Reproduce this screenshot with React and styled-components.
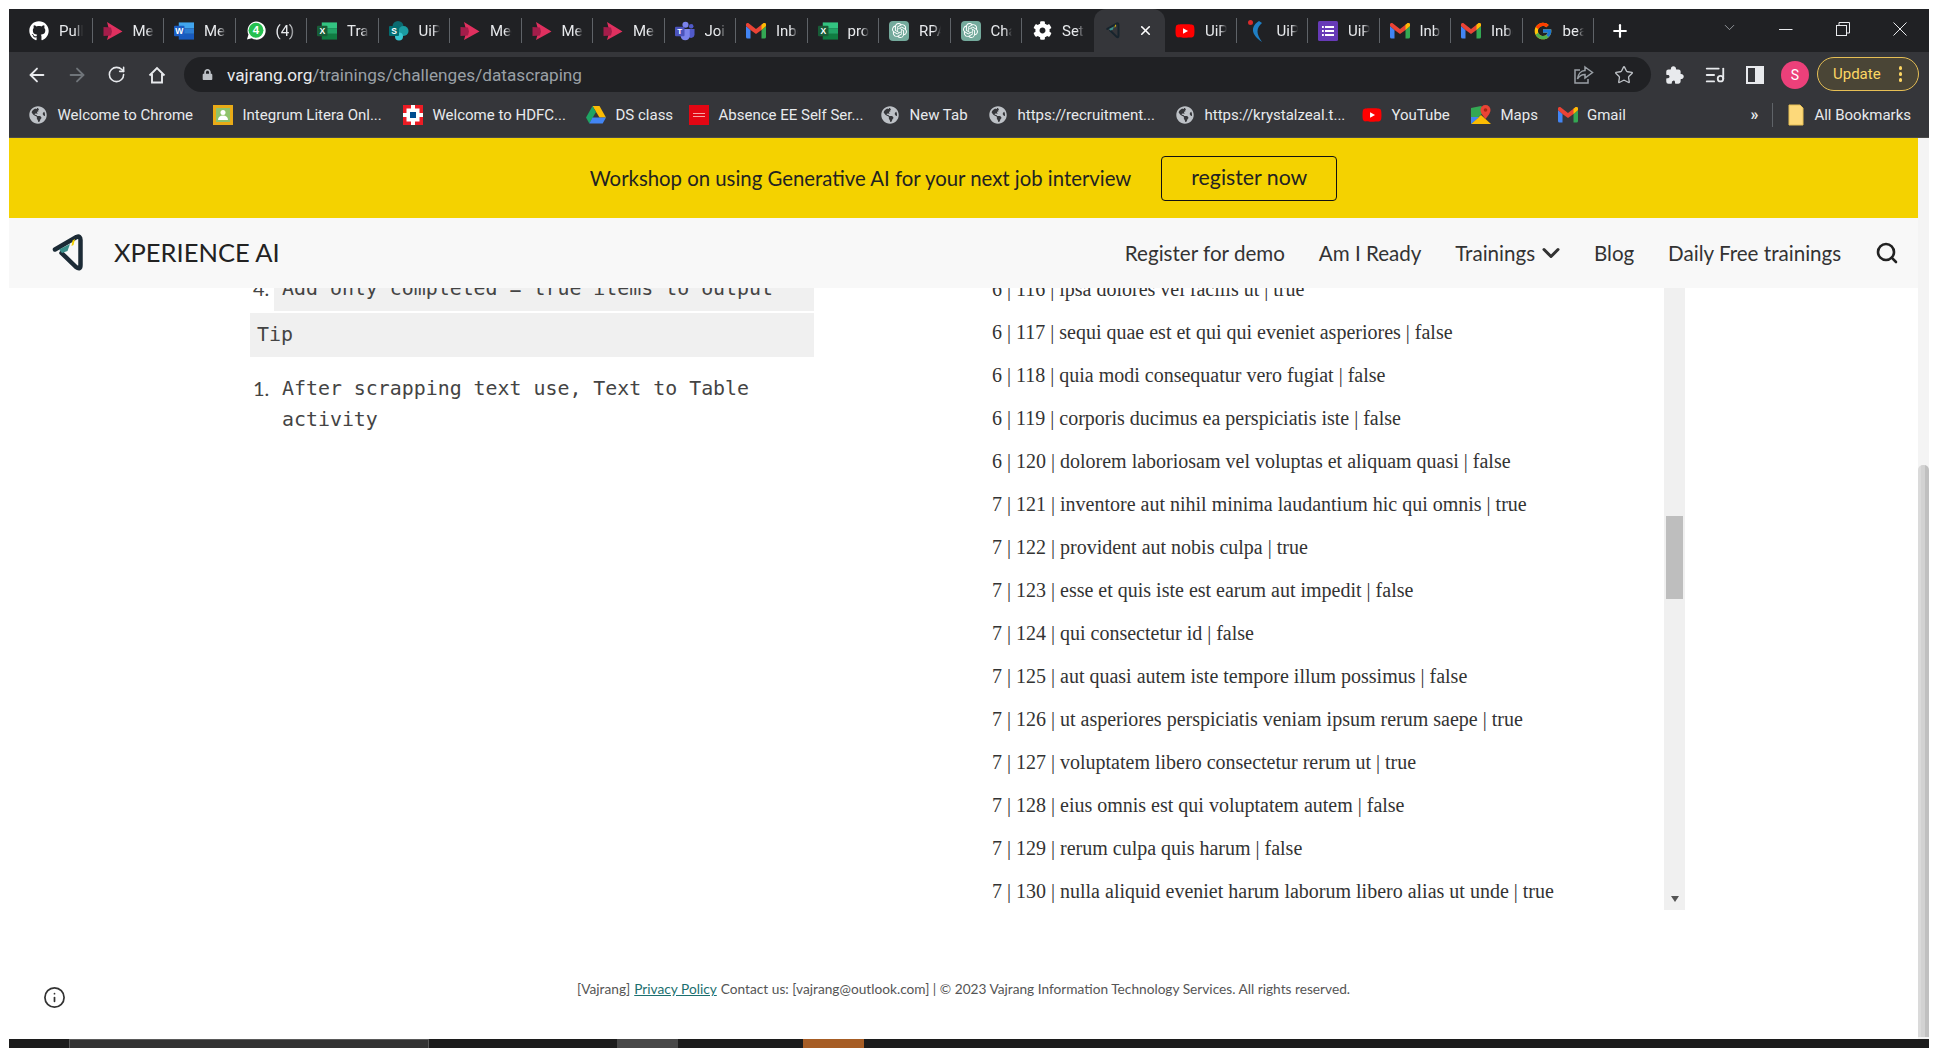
import React from 'react';
import styled, { createGlobalStyle } from 'styled-components';
import { FaGithub, FaGlobeAmericas, FaLock, FaCog, FaYoutube } from 'react-icons/fa';
import { FcGoogle } from 'react-icons/fc';
import { SiOpenai } from 'react-icons/si';
import { IoExtensionPuzzle } from 'react-icons/io5';
import { ArrowLeft, ArrowRight, RotateCw, Star, ListMusic, Search, Info, ChevronDown, X, Plus } from 'lucide-react';

const Global = createGlobalStyle`
  html, body { margin: 0; padding: 0; background: #fff; overflow: hidden; }
  * { box-sizing: border-box; }
`;

const Root = styled.div`
  height: 1048px;
  padding: 9px 9px 0;
  overflow: hidden;
`;
const Win = styled.div`
  height: 1039px;
  display: flex;
  flex-direction: column;
`;
const TabStrip = styled.div`
  height: 43px;
  flex: none;
  background: #202124;
  display: flex;
  align-items: center;
  padding-left: 12px;
  font-family: Roboto, sans-serif;
`;
const Tab = styled.div`
  position: relative;
  width: 71.5px;
  height: ${p => (p.$active ? '43px' : '25px')};
  flex: none;
  display: flex;
  align-items: center;
  padding-left: 10px;
  gap: 10px;
  border-right: 1px solid ${p => (p.$noSep ? 'transparent' : '#5f6368')};
  &:first-child { padding-left: 8px; }
  ${p => p.$active && 'background:#35363a;border-radius:12px 12px 0 0;border-right:none;padding-left:9px;'}
`;
const TabIcon = styled.span`
  width: 20px;
  height: 20px;
  flex: none;
  display: flex;
  align-items: center;
  justify-content: center;
`;
const TabLabel = styled.span`
  flex: 1;
  min-width: 0;
  margin-right: 9px;
  overflow: hidden;
  white-space: nowrap;
  color: #e8eaed;
  font-size: 15px;
  -webkit-mask-image: linear-gradient(to right, #000 65%, transparent 100%);
  mask-image: linear-gradient(to right, #000 65%, transparent 100%);
`;
const TabClose = styled.span`
  color: #fff;
  display: flex;
  margin-left: 5px;
`;
const NewTab = styled.div`
  width: 52px;
  flex: none;
  display: flex;
  justify-content: center;
  color: #fff;
`;
const WinControls = styled.div`
  margin-left: auto;
  display: flex;
  align-items: center;
  height: 100%;
  color: #e8eaed;
  padding-bottom: 4px;
`;
const TabSearch = styled.span`
  width: 30px;
  display: flex;
  justify-content: center;
  margin-right: 13px;
  color: #bdc1c6;
  margin-top: -2px;
`;
const WinBtn = styled.span`
  width: 57.3px;
  display: flex;
  justify-content: center;
`;
const Toolbar = styled.div`
  height: 40px;
  flex: none;
  background: #35363a;
  display: flex;
  align-items: flex-start;
  padding: 5px 0 0 7.5px;
  color: #fff;
`;
const ToolBtn = styled.span`
  width: 40px;
  height: 35px;
  flex: none;
  display: flex;
  align-items: center;
  justify-content: center;
  color: ${p => p.$color || '#e8eaed'};
`;
const Omnibox = styled.div`
  width: 1467px;
  height: 35px;
  flex: none;
  margin: 0 4px 0 7.5px;
  background: #202124;
  border-radius: 18px;
  display: flex;
  align-items: center;
  padding: 0 17px 0 18px;
  font-family: Roboto, sans-serif;
  font-size: 17.2px;
`;
const Lock = styled.span`
  color: #bdc1c6;
  display: flex;
  margin-right: 14px;
`;
const Host = styled.span`
  color: #e8eaed;
`;
const UrlPath = styled.span`
  color: #9aa0a6;
`;
const OmniActions = styled.div`
  margin-left: auto;
  display: flex;
  align-items: center;
  gap: 20px;
  color: #bdc1c6;
`;
const Avatar = styled.span`
  width: 28px;
  height: 28px;
  border-radius: 50%;
  background: #ec407a;
  color: #fff;
  font: 14px Roboto, sans-serif;
  display: flex;
  align-items: center;
  justify-content: center;
`;
const UpdatePill = styled.div`
  width: 102px;
  height: 34px;
  margin-left: 2px;
  border: 1.5px solid #e6bf55;
  border-radius: 17px;
  background: #4a4536;
  color: #fdd663;
  font: 15px Roboto, sans-serif;
  display: flex;
  align-items: center;
  padding-left: 15px;
  position: relative;
`;
const Dots = styled.span`
  margin-left: 18px;
  display: flex;
  flex-direction: column;
  gap: 2.5px;
  & i {
    width: 3.4px;
    height: 3.4px;
    border-radius: 50%;
    background: #fdd663;
    display: block;
  }
`;
const Bookmarks = styled.div`
  height: 46px;
  flex: none;
  background: #35363a;
  border-bottom: 1px solid #4a4a4a;
  display: flex;
  align-items: center;
  padding-left: 19px;
  font-family: Roboto, sans-serif;
  font-size: 15px;
  color: #e8eaed;
`;
const Bookmark = styled.div`
  width: ${p => p.$w}px;
  flex: none;
  display: flex;
  align-items: center;
  gap: 9.5px;
  white-space: nowrap;
`;
const BmIcon = styled.span`
  width: 20px;
  height: 20px;
  flex: none;
  display: flex;
  align-items: center;
  justify-content: center;
`;
const MoreBm = styled.span`
  margin-left: auto;
  font-size: 16px;
  font-weight: 700;
  padding-right: 14px;
  border-right: 1px solid #5f6368;
  height: 24px;
  display: flex;
  align-items: center;
`;
const AllBm = styled.div`
  display: flex;
  align-items: center;
  gap: 10px;
  margin-left: 15px;
  padding-right: 18px;
  white-space: nowrap;
`;
const BodyRow = styled.div`
  flex: 1;
  min-height: 0;
  display: flex;
`;
const Page = styled.div`
  flex: 1;
  min-width: 0;
  display: flex;
  flex-direction: column;
  background: #fff;
  font-family: Lato, sans-serif;
`;
const PageBar = styled.div`
  width: 11px;
  flex: none;
  background: #f4f4f4;
  display: flex;
  flex-direction: column;
`;
const PageThumb = styled.div`
  margin-top: 327px;
  height: 572px;
  border-radius: 5px 5px 0 0;
  background: linear-gradient(to right, #dadada 0 30%, #d2d2d2 30% 60%, #c0c0c0 60%);
`;
const Banner = styled.div`
  height: 80px;
  flex: none;
  background: #f4d200;
  display: flex;
  align-items: center;
  justify-content: center;
  gap: 30px;
  color: #222;
  font-size: 20.35px;
`;
const RegisterBtn = styled.div`
  width: 176px;
  height: 45px;
  border: 1.5px solid #111;
  border-radius: 4px;
  display: flex;
  align-items: center;
  justify-content: center;
  padding-bottom: 2px;
  color: #222;
  font-size: 21.3px;
`;
const Nav = styled.div`
  height: 70px;
  flex: none;
  background: #f8f8f8;
  display: flex;
  align-items: center;
  padding: 0 19px 0 43px;
  color: #333;
`;
const Brand = styled.span`
  margin-left: 30px;
  margin-bottom: 2px;
  font-size: 25.5px;
  color: #222;
`;
const NavLinks = styled.div`
  margin-left: auto;
  display: flex;
  align-items: center;
  gap: 33.8px;
  font-size: 20.6px;
`;
const NavItem = styled.span`
  display: flex;
  align-items: center;
  gap: 2px;
`;
const Caret = styled(ChevronDown)`
  margin-right: -5px;
`;
const Columns = styled.div`
  height: 622px;
  flex: none;
  display: flex;
  overflow: hidden;
  padding-left: 241px;
`;
const LeftCol = styled.div`
  width: 564px;
  flex: none;
  margin-top: -23px;
  font-family: 'DejaVu Sans Mono', 'Liberation Mono', monospace;
  font-size: 19.9px;
  color: #444;
`;
const CodeRow = styled.div`
  display: flex;
  line-height: 31px;
  min-height: ${p => p.$h || 31}px;
  align-items: ${p => (p.$h ? 'center' : 'flex-start')};
`;
const Num = styled.span`
  width: 24px;
  flex: none;
  padding-left: 3px;
  font-family: Lato, sans-serif;
  font-size: 20px;
`;
const CodeText = styled.span`
  flex: 1;
  padding-left: 8px;
  align-self: stretch;
  display: flex;
  align-items: center;
  background: ${p => (p.$shade ? '#f0f0f0' : 'transparent')};
`;
const Tip = styled.div`
  height: 44px;
  margin: 2px 0 16px;
  background: #f0f0f0;
  padding: 0 0 2px 7px;
  display: flex;
  align-items: center;
`;
const RightCol = styled.div`
  width: 693px;
  flex: none;
  margin-left: 178px;
  display: flex;
  height: 622px;
`;
const Rows = styled.div`
  flex: 1;
  margin-top: -20px;
  font-family: 'Liberation Serif', serif;
  font-size: 20px;
  color: #333;
`;
const DataRow = styled.div`
  height: 43px;
  line-height: 43px;
  white-space: nowrap;
`;
const ListBar = styled.div`
  width: 21px;
  flex: none;
  background: #f0f0f0;
  display: flex;
  flex-direction: column;
  align-items: center;
`;
const ListThumb = styled.div`
  width: 17px;
  height: 83px;
  margin-top: 228px;
  background: #bebebe;
`;
const ListArrow = styled.div`
  margin-top: auto;
  margin-bottom: 8px;
  border-left: 4px solid transparent;
  border-right: 4px solid transparent;
  border-top: 6px solid #555;
`;
const Footer = styled.div`
  flex: 1;
  position: relative;
  display: flex;
  justify-content: center;
  padding-top: 70px;
  font-size: 13.7px;
  color: #555;
`;
const PrivacyLink = styled.span`
  color: #1c6f6f;
  text-decoration: underline;
  margin: 0 4px;
`;
const InfoBadge = styled.span`
  position: absolute;
  left: 34px;
  top: 76px;
  color: #333;
  display: flex;
`;
const Taskbar = styled.div`
  height: 9px;
  flex: none;
  background: #1c1c1c;
  display: flex;
  overflow: hidden;
  position: relative;
`;
const TaskSeg = styled.div`
  width: ${p => p.$w}px;
  flex: none;
  background: ${p => p.$bg || 'transparent'};
  ${p => p.$outlined && 'border-top:1px solid #5a5a5a;border-left:1px solid #5a5a5a;border-right:1px solid #5a5a5a;'}
`;
const Clock = styled.div`
  margin-left: auto;
  margin-right: 97px;
  padding-top: 7px;
  color: #fff;
  font: 13px/14px Roboto, sans-serif;
`;

const RedArrow = () => (
  <svg width="20" height="20" viewBox="0 0 20 20">
    <polygon points="4,1 19.5,10.5 4,19 6.5,10.5" fill="#e0305f" />
    <polygon points="0.5,6 8,6.5 9,10.5 8,14.5 0.5,15" fill="#a31d4a" />
  </svg>
);
const OfficeDoc = ({ c1, c2, c3, c4, letter }) => (
  <svg width="21" height="20" viewBox="0 0 21 20">
    <rect x="5" y="1" width="16" height="6" fill={c1} />
    <rect x="5" y="7" width="16" height="6" fill={c2} />
    <rect x="5" y="13" width="16" height="6" fill={c3} />
    <rect x="0" y="4.5" width="11" height="11" rx="1" fill={c4} />
    <text x="5.5" y="13" textAnchor="middle" fontSize="9" fontWeight="700" fill="#fff" fontFamily="Liberation Sans">{letter}</text>
  </svg>
);
const Word = () => <OfficeDoc c1="#41a5ee" c2="#2b7cd3" c3="#185abd" c4="#1a5dc4" letter="W" />;
const Excel = () => <OfficeDoc c1="#33c481" c2="#21a366" c3="#107c41" c4="#185c37" letter="X" />;
const Whats = () => (
  <svg width="21" height="21" viewBox="0 0 21 21">
    <path d="M1 20 l1.6-5.2 A9.5 9.5 0 1 1 6 18.6 Z" fill="#fff" />
    <circle cx="10.5" cy="10.2" r="7.8" fill="#25c04f" />
    <text x="10.5" y="14.5" textAnchor="middle" fontSize="12" fontWeight="700" fill="#fff" fontFamily="Liberation Sans">4</text>
  </svg>
);
const SharePoint = () => (
  <svg width="20" height="20" viewBox="0 0 20 20">
    <circle cx="9" cy="5.5" r="5.5" fill="#0b6a70" />
    <circle cx="14.5" cy="10" r="5" fill="#1a9ba1" />
    <circle cx="10" cy="15.5" r="4" fill="#37c6d0" />
    <rect x="0" y="5" width="10" height="10" rx="1" fill="#036c70" />
    <text x="5" y="13" textAnchor="middle" fontSize="8.5" fontWeight="700" fill="#fff" fontFamily="Liberation Sans">S</text>
  </svg>
);
const Teams = () => (
  <svg width="21" height="20" viewBox="0 0 21 20">
    <circle cx="11" cy="3.5" r="3.2" fill="#7b83eb" />
    <circle cx="17" cy="5" r="2.4" fill="#5059c9" />
    <path d="M14 8h6.5v6a3.5 3.5 0 0 1-6.5 1.5Z" fill="#5059c9" />
    <path d="M6 8h9.5v7.5a4.8 4.8 0 0 1-9.5 0Z" fill="#7b83eb" />
    <rect x="0" y="5.5" width="10" height="10" rx="1" fill="#4b53bc" />
    <text x="5" y="13.5" textAnchor="middle" fontSize="8.5" fontWeight="700" fill="#fff" fontFamily="Liberation Sans">T</text>
  </svg>
);
const Gmail = () => (
  <svg width="20" height="16" viewBox="0 0 20 16">
    <path d="M0 3v11a1.5 1.5 0 0 0 1.5 1.5H4.5V7Z" fill="#4285f4" />
    <path d="M15.5 7v8.5h3A1.5 1.5 0 0 0 20 14V3Z" fill="#34a853" />
    <path d="M0 1.5C0 .2 1.6-.5 2.6.3L10 6l7.4-5.7C18.4-.5 20 .2 20 1.5V3l-4.5 4L10 11 4.5 7 0 3Z" fill="#ea4335" />
    <path d="M15.5 7l4.5-4V1.5C20 .2 18.4-.5 17.4.3L15.5 1.8Z" fill="#fbbc04" />
  </svg>
);
const GptBox = styled.span`
  width: 20px;
  height: 20px;
  border-radius: 4px;
  background: #74aa9c;
  color: #fff;
  display: flex;
  align-items: center;
  justify-content: center;
`;
const Gpt = () => <GptBox><SiOpenai size={15} /></GptBox>;
const Crescent = () => (
  <svg width="20" height="24" viewBox="0 0 20 24">
    <path d="M12 2 C4 7 3 15 15 23 C9 15 9 9 15 4 Z" fill="#1f7fc4" />
    <circle cx="3.5" cy="3.5" r="2.5" fill="#d92b2b" />
  </svg>
);
const FormsIcon = () => (
  <svg width="20" height="20" viewBox="0 0 20 20">
    <rect width="20" height="20" rx="1.5" fill="#673ab7" />
    <path d="M4 6h1.8M7 6h9M4 10h1.8M7 10h9M4 14h1.8M7 14h9" stroke="#fff" strokeWidth="1.8" />
  </svg>
);
const YtBox = styled(FaYoutube)`
  color: #f00;
  background: linear-gradient(#fff, #fff) center / 8px 7px no-repeat;
`;
const XLogo = ({ w = 32, h = 38, muted }) => (
  <svg width={w} height={h} viewBox="0 0 32 38">
    <path d="M3 15.5 L24.5 3 Q28.5 1.5 28.5 6 V31 Q28.5 36.5 24 33 L9.5 19" fill="none" stroke={muted ? '#17242d' : '#1c2b36'} strokeWidth="4.5" strokeLinecap="round" strokeLinejoin="round" />
    <polygon points="7,15.5 18,10 15.5,17 10,19" fill="#3a8f8a" />
    <polygon points="20.5,6.5 23,5 21.5,11 19.5,12" fill="#f4d200" />
  </svg>
);
const Home = () => (
  <svg width="18" height="18" viewBox="0 0 18 18" fill="none" stroke="#e8eaed" strokeWidth="1.9">
    <path d="M1.5 9.5 L9 2 L16.5 9.5 M4 8 V16.5 H14 V8" />
  </svg>
);
const Share = () => (
  <svg width="20" height="19" viewBox="0 0 20 19" fill="none" stroke="#9aa0a6" strokeWidth="1.5">
    <path d="M6 5H1v13h13v-4" />
    <path d="M11 2l7.5 5.5L11 13V9.5C8 9.5 5.5 10.5 3.5 14 4 9 7 5.5 11 5.5Z" />
  </svg>
);
const SidePanel = () => (
  <svg width="18" height="18" viewBox="0 0 18 18">
    <rect x="1" y="1" width="16" height="16" fill="none" stroke="#e8eaed" strokeWidth="2" />
    <rect x="9" y="1" width="8" height="16" fill="#e8eaed" />
  </svg>
);
const MinIcon = () => <svg width="14" height="14"><path d="M0 7.5h13.5" stroke="#e8eaed" strokeWidth="1" /></svg>;
const RestoreIcon = () => (
  <svg width="14" height="14" fill="none" stroke="#e8eaed" strokeWidth="1"><rect x=".5" y="3.5" width="10" height="10" /><path d="M3 3.5V.5h10.5v10.5h-3" /></svg>
);
const CloseIcon = () => <svg width="14" height="14" stroke="#e8eaed" strokeWidth="1"><path d="M.5.5l13 13M13.5.5l-13 13" /></svg>;
const Globe = () => <FaGlobeAmericas size={18} color="#bdc1c6" />;
const Integrum = () => (
  <svg width="20" height="20" viewBox="0 0 20 20">
    <rect width="20" height="20" fill="#e9ab17" />
    <rect x="3" y="3" width="14" height="14" fill="#8fc36b" />
    <circle cx="10" cy="7.5" r="2.5" fill="#fff" />
    <path d="M5 15c0-3 2-4.5 5-4.5s5 1.5 5 4.5Z" fill="#fff" />
  </svg>
);
const Hdfc = () => (
  <svg width="20" height="20" viewBox="0 0 20 20">
    <rect width="20" height="20" fill="#ed1c24" />
    <rect x="3.5" y="3.5" width="13" height="13" fill="#fff" />
    <rect x="8" width="4" height="20" fill="#fff" />
    <rect y="8" width="20" height="4" fill="#fff" />
    <rect x="7" y="7" width="6" height="6" fill="#004c8f" />
  </svg>
);
const Drive = () => (
  <svg width="20" height="18" viewBox="0 0 20 18">
    <polygon points="6.5,0 13.5,0 20,11.5 13.5,11.5" fill="#fbbc04" />
    <polygon points="6.5,0 0,11.5 3.3,17.5 10,6" fill="#1fa463" />
    <polygon points="3.3,17.5 16.7,17.5 20,11.5 6.5,11.5" fill="#4285f4" />
  </svg>
);
const Oracle = () => (
  <svg width="20" height="20" viewBox="0 0 20 20">
    <rect width="20" height="20" fill="#e30613" />
    <rect x="4" y="8" width="12" height="1" fill="#f7a5a5" />
    <rect x="4" y="11" width="12" height="1" fill="#f7a5a5" />
  </svg>
);
const Maps = () => (
  <svg width="20" height="20" viewBox="0 0 20 20">
    <polygon points="0,3 10,1 15,5 0,19" fill="#34a853" />
    <polygon points="0,19 10,10 20,19" fill="#fbbc04" />
    <polygon points="0,19 0,12 8,12" fill="#4285f4" />
    <path d="M14.5 0a5 5 0 0 1 5 5c0 3.5-5 9-5 9s-5-5.5-5-9a5 5 0 0 1 5-5Z" fill="#ea4335" />
    <circle cx="14.5" cy="5" r="1.8" fill="#a52714" />
  </svg>
);
const Folder = () => (
  <svg width="16" height="22" viewBox="0 0 16 22">
    <path d="M1 1h11l3 3v17H1Z" fill="#fdd97a" stroke="#e6bf55" />
  </svg>
);

const tabs = [
  [<FaGithub size={20} color="#fff" />, 'Pull requests'],
  [<RedArrow />, 'Meeting'],
  [<Word />, 'Meeting'],
  [<Whats />, '(4) WhatsApp'],
  [<Excel />, 'Tracker'],
  [<SharePoint />, 'UiPath'],
  [<RedArrow />, 'Meeting'],
  [<RedArrow />, 'Meeting'],
  [<RedArrow />, 'Meeting'],
  [<Teams />, 'Join'],
  [<Gmail />, 'Inbox'],
  [<Excel />, 'project'],
  [<Gpt />, 'RPA'],
  [<Gpt />, 'Chat'],
  [<FaCog size={19} color="#fff" />, 'Settings', true],
  null,
  [<YtBox size={20} />, 'UiPath'],
  [<Crescent />, 'UiPath'],
  [<FormsIcon />, 'UiPath'],
  [<Gmail />, 'Inbox'],
  [<Gmail />, 'Inbox'],
  [<FcGoogle size={20} />, 'beautiful'],
];

const bookmarks = [
  [<Globe />, 'Welcome to Chrome', 185],
  [<Integrum />, 'Integrum Litera Onl...', 190],
  [<Hdfc />, 'Welcome to HDFC...', 183],
  [<Drive />, 'DS class', 103],
  [<Oracle />, 'Absence EE Self Ser...', 191],
  [<Globe />, 'New Tab', 108],
  [<Globe />, 'https://recruitment...', 187],
  [<Globe />, 'https://krystalzeal.t...', 187],
  [<YtBox size={20} />, 'YouTube', 109],
  [<Maps />, 'Maps', 86.5],
];

const rows = [
  '6 | 116 | ipsa dolores vel facilis ut | true',
  '6 | 117 | sequi quae est et qui qui eveniet asperiores | false',
  '6 | 118 | quia modi consequatur vero fugiat | false',
  '6 | 119 | corporis ducimus ea perspiciatis iste | false',
  '6 | 120 | dolorem laboriosam vel voluptas et aliquam quasi | false',
  '7 | 121 | inventore aut nihil minima laudantium hic qui omnis | true',
  '7 | 122 | provident aut nobis culpa | true',
  '7 | 123 | esse et quis iste est earum aut impedit | false',
  '7 | 124 | qui consectetur id | false',
  '7 | 125 | aut quasi autem iste tempore illum possimus | false',
  '7 | 126 | ut asperiores perspiciatis veniam ipsum rerum saepe | true',
  '7 | 127 | voluptatem libero consectetur rerum ut | true',
  '7 | 128 | eius omnis est qui voluptatem autem | false',
  '7 | 129 | rerum culpa quis harum | false',
  '7 | 130 | nulla aliquid eveniet harum laborum libero alias ut unde | true',
];

export default function App() {
  return (
    <Root>
      <Global />
      <Win>
        <TabStrip>
          {tabs.map((t, i) =>
            t ? (
              <Tab key={i} $noSep={t[2]}>
                <TabIcon>{t[0]}</TabIcon>
                <TabLabel>{t[1]}</TabLabel>
              </Tab>
            ) : (
              <Tab key={i} $active>
                <TabIcon><XLogo w={14} h={17} muted /></TabIcon>
                <TabClose><X size={15} strokeWidth={2.6} /></TabClose>
              </Tab>
            )
          )}
          <NewTab><Plus size={20} strokeWidth={2.6} /></NewTab>
          <WinControls>
            <TabSearch><ChevronDown size={17} strokeWidth={1} /></TabSearch>
            <WinBtn><MinIcon /></WinBtn>
            <WinBtn><RestoreIcon /></WinBtn>
            <WinBtn><CloseIcon /></WinBtn>
          </WinControls>
        </TabStrip>
        <Toolbar>
          <ToolBtn><ArrowLeft size={22} strokeWidth={2} /></ToolBtn>
          <ToolBtn $color="#70757a"><ArrowRight size={22} strokeWidth={2} /></ToolBtn>
          <ToolBtn><RotateCw size={19} strokeWidth={2} /></ToolBtn>
          <ToolBtn><Home /></ToolBtn>
          <Omnibox>
            <Lock><FaLock size={11} /></Lock>
            <Host>vajrang.org</Host>
            <UrlPath>/trainings/challenges/datascraping</UrlPath>
            <OmniActions>
              <Share />
              <Star size={20} strokeWidth={1.6} />
            </OmniActions>
          </Omnibox>
          <ToolBtn><IoExtensionPuzzle size={20} /></ToolBtn>
          <ToolBtn><ListMusic size={22} strokeWidth={2} /></ToolBtn>
          <ToolBtn><SidePanel /></ToolBtn>
          <ToolBtn><Avatar>S</Avatar></ToolBtn>
          <UpdatePill>Update<Dots><i /><i /><i /></Dots></UpdatePill>
        </Toolbar>
        <Bookmarks>
          {bookmarks.map((b, i) => (
            <Bookmark key={i} $w={b[2]}>
              <BmIcon>{b[0]}</BmIcon>
              {b[1]}
            </Bookmark>
          ))}
          <Bookmark $w={67}>
            <BmIcon><Gmail /></BmIcon>
            Gmail
          </Bookmark>
          <MoreBm>»</MoreBm>
          <AllBm><Folder />All Bookmarks</AllBm>
        </Bookmarks>
        <BodyRow>
          <Page>
            <Banner>
              Workshop on using Generative AI for your next job interview
              <RegisterBtn>register now</RegisterBtn>
            </Banner>
            <Nav>
              <XLogo />
              <Brand>XPERIENCE AI</Brand>
              <NavLinks>
                <NavItem>Register for demo</NavItem>
                <NavItem>Am I Ready</NavItem>
                <NavItem>Trainings <Caret size={28} strokeWidth={2.6} /></NavItem>
                <NavItem>Blog</NavItem>
                <NavItem>Daily Free trainings</NavItem>
                <Search size={24} strokeWidth={2.6} color="#222" />
              </NavLinks>
            </Nav>
            <Columns>
              <LeftCol>
                <CodeRow $h={46}>
                  <Num>4.</Num>
                  <CodeText $shade>Add only completed = true items to output</CodeText>
                </CodeRow>
                <Tip>Tip</Tip>
                <CodeRow>
                  <Num>1.</Num>
                  <CodeText>After scrapping text use, Text to Table activity</CodeText>
                </CodeRow>
              </LeftCol>
              <RightCol>
                <Rows>
                  {rows.map(r => <DataRow key={r}>{r}</DataRow>)}
                </Rows>
                <ListBar>
                  <ListThumb />
                  <ListArrow />
                </ListBar>
              </RightCol>
            </Columns>
            <Footer>
              <span>
                [Vajrang]<PrivacyLink>Privacy Policy</PrivacyLink>Contact us: [vajrang@outlook.com] | © 2023 Vajrang Information Technology Services. All rights reserved.
              </span>
              <InfoBadge><Info size={23} strokeWidth={1.8} /></InfoBadge>
            </Footer>
          </Page>
          <PageBar><PageThumb /></PageBar>
        </BodyRow>
        <Taskbar>
          <TaskSeg $w={60} />
          <TaskSeg $w={360} $bg="#333" $outlined />
          <TaskSeg $w={188} />
          <TaskSeg $w={61} $bg="#484848" />
          <TaskSeg $w={125} />
          <TaskSeg $w={61} $bg="#a65d25" />
          <Clock>1051</Clock>
        </Taskbar>
      </Win>
    </Root>
  );
}
